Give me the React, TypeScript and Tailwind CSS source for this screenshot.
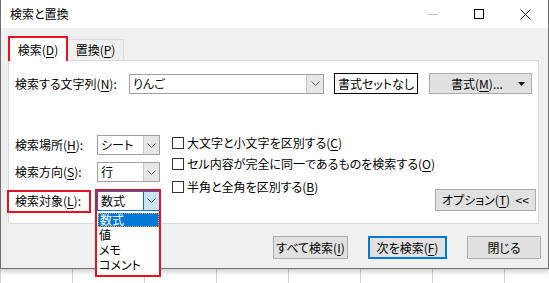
import React from "react";

const font = { fontFamily: '"Noto Sans CJK JP", "Noto Sans", sans-serif' };

function Chevron({ color = "#606060" }: { color?: string }) {
  return (
    <svg width="9" height="5" viewBox="0 0 9 5" fill="none">
      <path d="M0.5 0.5 L4.5 4.5 L8.5 0.5" stroke={color} strokeWidth="1" />
    </svg>
  );
}

function U({ children }: { children: React.ReactNode }) {
  return <span className="underline underline-offset-2 decoration-1">{children}</span>;
}

function Select({ value, focused }: { value: string; focused?: boolean }) {
  return (
    <div
      className={`flex h-[20px] w-[63px] shrink-0 items-center bg-white border ${
        focused ? "border-[#0078d7]" : "border-[#a0a0a0]"
      }`}
    >
      <span className="flex-1 pl-[3px] text-[12px] leading-none">{value}</span>
      <div
        className={`flex h-full w-[16px] items-center justify-center border-l ${
          focused ? "bg-[#cce4f7] border-[#0078d7]" : "bg-[#e6e6e6] border-[#c8c8c8]"
        }`}
      >
        <Chevron color={focused ? "#1a4d7a" : "#606060"} />
      </div>
    </div>
  );
}

function Check({ children }: { children: React.ReactNode }) {
  return (
    <div className="flex h-[21px] items-center gap-[3px] whitespace-nowrap">
      <div className="h-[12px] w-[12px] shrink-0 border border-[#333333] bg-white" />
      <span className="text-[12px] leading-none">{children}</span>
    </div>
  );
}

function Btn({
  children,
  w,
  primary,
}: {
  children: React.ReactNode;
  w: string;
  primary?: boolean;
}) {
  return (
    <div
      className={`flex h-[23px] items-center justify-center whitespace-nowrap bg-[#e1e1e1] text-[12px] leading-none ${w} ${
        primary ? "border-2 border-[#0078d7]" : "border border-[#adadad]"
      }`}
    >
      {children}
    </div>
  );
}

export default function App() {
  return (
    <div
      className="relative h-[283px] w-[549px] overflow-hidden whitespace-nowrap bg-white text-black [font-feature-settings:'palt']"
      style={font}
    >
      {/* dialog */}
      <div className="relative z-10 flex h-[269px] w-[549px] flex-col border-x border-b border-[#6f6f6f] bg-[#f0f0f0] shadow-[0_2px_6px_rgba(0,0,0,0.25)]">
        {/* title bar */}
        <div className="flex h-[28px] items-center bg-white">
          <span className="pl-[9px] text-[12px] leading-none">検索と置換</span>
          <div className="ml-auto flex items-center">
            <div className="flex w-[46px] justify-center">
              <div className="h-px w-[10px] bg-[#c4c4c4]" />
            </div>
            <div className="flex w-[46px] justify-center">
              <div className="h-[10px] w-[10px] border border-black" />
            </div>
            <div className="flex w-[46px] justify-center">
              <svg width="11" height="11" viewBox="0 0 11 11">
                <path d="M0.5 0.5 L10.5 10.5 M10.5 0.5 L0.5 10.5" stroke="#111" strokeWidth="1" />
              </svg>
            </div>
          </div>
        </div>

        {/* body */}
        <div className="flex flex-1 flex-col px-[7px]">
          {/* tabs */}
          <div className="mt-[9px] flex h-[23px] items-end">
            <div className="relative z-10 -mb-px flex h-[25px] w-[60px] items-center justify-center border-2 border-b-0 border-[#e81123] bg-white text-[12px] leading-none">
              <span>
                検索(<U>D</U>)
              </span>
            </div>
            <div className="flex h-[21px] w-[56px] items-center justify-center border border-b-0 border-l-0 border-[#d9d9d9] bg-[#f0f0f0] text-[12px] leading-none">
              <span>
                置換(<U>P</U>)
              </span>
            </div>
          </div>

          {/* panel */}
          <div className="flex h-[164px] w-[531px] flex-col border border-[#d9d9d9] bg-white pl-[6px] pt-[12px]">
            <div className="flex h-[21px] items-center">
              <span className="w-[114px] shrink-0 text-[12px] leading-none">
                検索する文字列(<U>N</U>):
              </span>
              <div className="flex h-[20px] w-[195px] shrink-0 items-center border border-[#a0a0a0] bg-white">
                <span className="flex-1 pl-[3px] text-[12px] leading-none">りんご</span>
                <div className="flex h-full w-[17px] items-center justify-center border-l border-[#c8c8c8] bg-[#e6e6e6]">
                  <Chevron />
                </div>
              </div>
              <div className="ml-[10px] flex h-[21px] w-[84px] shrink-0 items-center justify-center border border-black bg-white text-[12px] leading-none">
                書式セットなし
              </div>
              <div className="ml-[11px] flex h-[21px] w-[103px] shrink-0 items-center border border-[#adadad] bg-[#e1e1e1] text-[12px] leading-none">
                <span className="flex-1 pl-[6px] text-center">
                  書式(<U>M</U>)...
                </span>
                <svg width="7" height="4" viewBox="0 0 7 4" className="mr-[6px]">
                  <path d="M0 0 L7 0 L3.5 4 Z" fill="#111" />
                </svg>
              </div>
            </div>

            <div className="mt-[41px] flex">
              <div className="flex shrink-0 flex-col">
                <div className="flex h-[20px] items-center">
                  <span className="w-[82px] text-[12px] leading-none">
                    検索場所(<U>H</U>):
                  </span>
                  <Select value="シート" />
                </div>
                <div className="mt-[7px] flex h-[20px] items-center">
                  <span className="w-[82px] text-[12px] leading-none">
                    検索方向(<U>S</U>):
                  </span>
                  <Select value="行" />
                </div>
                <div className="mt-[8px] flex h-[21px] items-center">
                  <span className="w-[82px] text-[12px] leading-none">
                    検索対象(<U>L</U>):
                  </span>
                  <Select value="数式" focused />
                </div>
              </div>

              <div className="ml-[12px] -mt-[3px] flex shrink-0 flex-col">
                <Check>
                  大文字と小文字を区別する(<U>C</U>)
                </Check>
                <Check>
                  セル内容が完全に同一であるものを検索する(<U>O</U>)
                </Check>
                <div className="mt-[2px]">
                  <Check>
                    半角と全角を区別する(<U>B</U>)
                  </Check>
                </div>
              </div>

              <div className="ml-auto mr-[5px] flex flex-col justify-end">
                <div className="flex h-[22px] w-[101px] items-center justify-center border border-[#adadad] bg-[#e1e1e1] text-[12px] leading-none">
                  オプション(<U>T</U>)&nbsp;&nbsp;&lt;&lt;
                </div>
              </div>
            </div>
          </div>

          {/* bottom buttons */}
          <div className="mt-[12px] flex justify-end gap-[20px]">
            <Btn w="w-[75px]">
              すべて検索(<U>I</U>)
            </Btn>
            <Btn w="w-[79px]" primary>
              次を検索(<U>F</U>)
            </Btn>
            <Btn w="w-[74px]">閉じる</Btn>
          </div>
        </div>
      </div>

      {/* excel grid below */}
      <div className="flex h-[14px]">
        <div className="w-[7px]" />
        {Array.from({ length: 8 }).map((_, i) => (
          <div key={i} className="h-full w-[72px] shrink-0 border-l border-[#d4d4d4]" />
        ))}
      </div>

      {/* open dropdown list */}
      <div className="absolute left-[97px] top-[212px] z-20 flex h-[63px] w-[63px] flex-col bg-white pt-[1px] text-[12px] leading-none">
        <div className="mx-[1px] flex h-[14px] items-center border border-dotted border-[#f0a030] bg-[#0078d7] pl-[1px] text-white">
          数式
        </div>
        <div className="flex h-[15px] items-center pl-[2px]">値</div>
        <div className="flex h-[15px] items-center pl-[2px]">メモ</div>
        <div className="flex h-[15px] items-center pl-[2px]">コメント</div>
      </div>

      {/* red annotations */}
      <div className="pointer-events-none absolute left-[7px] top-[190px] z-30 h-[23px] w-[84px] border-2 border-[#e81123]" />
      <div className="pointer-events-none absolute left-[95px] top-[189px] z-30 h-[88px] w-[66px] border-2 border-[#e81123]" />
    </div>
  );
}
